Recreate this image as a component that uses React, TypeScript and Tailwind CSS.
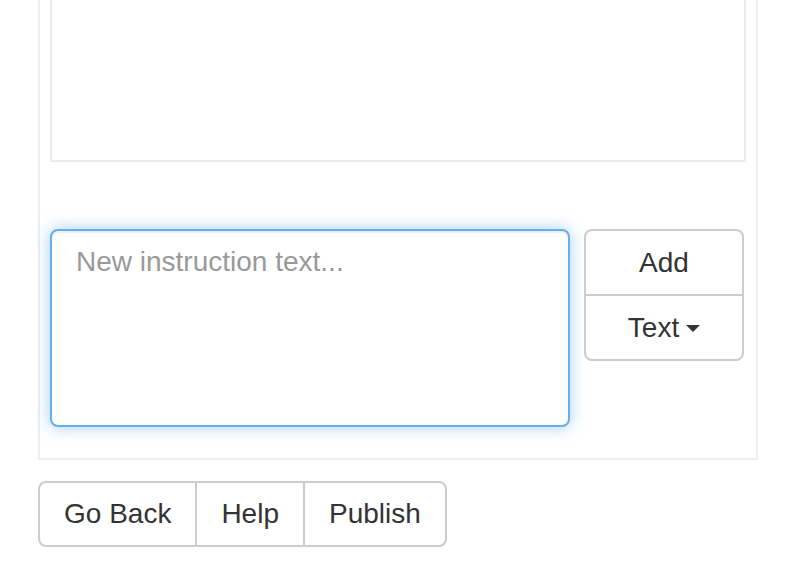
import React from "react";

export default function App() {
  return (
    <div className="w-[794px] h-[588px] bg-white text-[#333] font-['Liberation_Sans',Arial,sans-serif] overflow-hidden">
      <div className="ml-[38px] w-[720px] border-x-2 border-b-2 border-[#eeeeee] px-[10px] pb-[31px]">
        <div className="h-[162px] border-x-2 border-b-2 border-[#ebebeb]" />
        <div className="mt-[67px] flex items-start">
          <textarea
            placeholder="New instruction text..."
            className="w-[520px] h-[198px] resize-none rounded-[8px] border-2 border-[#66afe9] bg-white px-[24px] py-[11px] text-[28px] leading-[40px] text-[#555] placeholder:text-[#999] outline-none shadow-[inset_0_2px_2px_rgba(0,0,0,0.075),0_0_16px_rgba(102,175,233,0.6)]"
          />
          <div className="ml-[14px] w-[160px] flex flex-col">
            <button className="h-[67px] border-2 border-[#ccc] rounded-t-[8px] bg-white text-[28px] leading-[40px] text-[#333]">
              Add
            </button>
            <button className="-mt-[2px] h-[67px] border-2 border-[#ccc] rounded-b-[8px] bg-white text-[28px] leading-[40px] text-[#333] flex items-center justify-center">
              <span>Text</span>
              <span className="ml-[7px] mt-[2px] inline-block w-0 h-0 border-x-[7px] border-x-transparent border-t-[7px] border-t-[#333]" />
            </button>
          </div>
        </div>
      </div>
      <div className="mt-[21px] ml-[38px] inline-flex">
        <button className="h-[66px] px-[24px] border-2 border-[#ccc] rounded-l-[8px] bg-white text-[28px] leading-[40px] text-[#333]">
          Go Back
        </button>
        <button className="-ml-[2px] h-[66px] px-[24px] border-2 border-[#ccc] bg-white text-[28px] leading-[40px] text-[#333]">
          Help
        </button>
        <button className="-ml-[2px] h-[66px] px-[24px] border-2 border-[#ccc] rounded-r-[8px] bg-white text-[28px] leading-[40px] text-[#333]">
          Publish
        </button>
      </div>
    </div>
  );
}
